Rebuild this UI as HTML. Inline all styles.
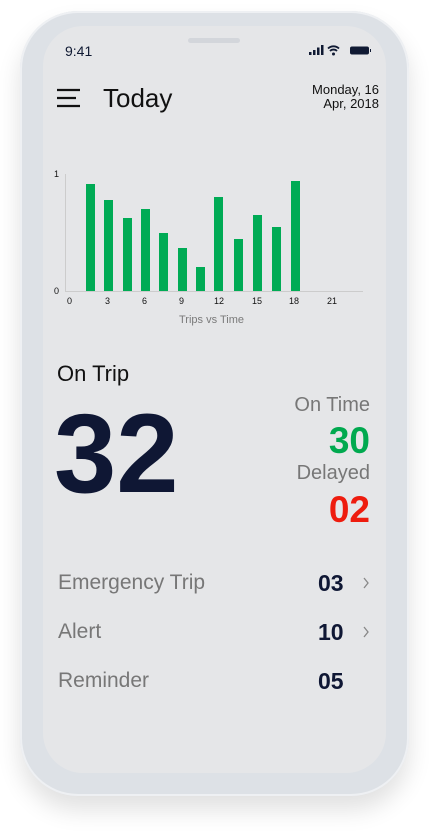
<!DOCTYPE html><html><head><meta charset="utf-8"><style>
body{margin:0;width:429px;height:832px;background:#fff;position:relative;overflow:hidden;font-family:"Liberation Sans",sans-serif}
.phone{position:absolute;left:20px;top:11px;width:389px;height:785px;border-radius:58px;background:#dde1e6;box-shadow:0 14px 24px rgba(0,0,0,.12),inset 0 0 0 2px #eef0f3}
.screen{position:absolute;left:43px;top:26px;width:343px;height:747px;border-radius:40px;background:#e5e6e8}
.a{position:absolute;white-space:nowrap}
.bar{position:absolute;background:#00ab55;width:9px}
</style></head><body>
<div class="phone"></div>
<div class="screen"></div>
<div class="a" style="left:188px;top:38px;width:52px;height:5px;border-radius:3px;background:#d3d6db"></div>
<div class="a" style="left:65px;top:43px;font-size:14px;color:#101a33">9:41</div>
<svg class="a" style="left:309px;top:45px" width="62" height="11"><rect x="0" y="7" width="2.5" height="3" fill="#101a33"/><rect x="4" y="5" width="2.5" height="5" fill="#101a33"/><rect x="8" y="2.5" width="2.5" height="7.5" fill="#101a33"/><rect x="12" y="0" width="2.5" height="10" fill="#101a33"/><path d="M19 3.5a8 8 0 0 1 11 0M21 6a5 5 0 0 1 7 0" stroke="#101a33" stroke-width="1.8" fill="none"/><circle cx="24.5" cy="9" r="1.5" fill="#101a33"/><rect x="41" y="1.5" width="19" height="8" rx="2" fill="#101a33"/><rect x="61" y="4" width="1.2" height="3" fill="#101a33"/></svg>
<svg class="a" style="left:56px;top:88px" width="26" height="20"><path d="M1 2H24M1 10H20M1 18H24" stroke="#111" stroke-width="2.2"/></svg>
<div class="a" style="left:103px;top:83px;font-size:26px;color:#111">Today</div>
<div class="a" style="right:50px;top:83px;font-size:13px;line-height:14px;color:#111;text-align:right">Monday, 16<br>Apr, 2018</div>
<div class="a" style="left:65px;top:174px;width:1px;height:117px;background:#ccc"></div>
<div class="a" style="left:65px;top:291px;width:298px;height:1px;background:#ccc"></div>
<div class="a" style="left:54px;top:169px;font-size:9px;color:#111">1</div>
<div class="a" style="left:54px;top:286px;font-size:9px;color:#111">0</div>
<div class="a" style="top:296px;font-size:9px;color:#111;left:0;width:429px;height:12px">
<span class="a" style="left:67px">0</span><span class="a" style="left:105px">3</span><span class="a" style="left:142px">6</span><span class="a" style="left:179px">9</span><span class="a" style="left:214px">12</span><span class="a" style="left:252px">15</span><span class="a" style="left:289px">18</span><span class="a" style="left:327px">21</span></div>
<div class="a" style="left:179px;top:314px;font-size:11px;color:#7a7a7a">Trips vs Time</div>
<div class="bar" style="left:86px;top:184px;height:107px"></div>
<div class="bar" style="left:104px;top:200px;height:91px"></div>
<div class="bar" style="left:123px;top:218px;height:73px"></div>
<div class="bar" style="left:141px;top:209px;height:82px"></div>
<div class="bar" style="left:159px;top:233px;height:58px"></div>
<div class="bar" style="left:178px;top:248px;height:43px"></div>
<div class="bar" style="left:196px;top:267px;height:24px"></div>
<div class="bar" style="left:214px;top:197px;height:94px"></div>
<div class="bar" style="left:234px;top:239px;height:52px"></div>
<div class="bar" style="left:253px;top:215px;height:76px"></div>
<div class="bar" style="left:272px;top:227px;height:64px"></div>
<div class="bar" style="left:291px;top:181px;height:110px"></div>
<div class="a" style="left:57px;top:361px;font-size:22px;color:#111">On Trip</div>
<div class="a" style="left:54px;top:398px;font-size:112px;font-weight:bold;color:#0f1734;line-height:112px">32</div>
<div class="a" style="right:59px;top:394px;font-size:20px;color:#777">On Time</div>
<div class="a" style="right:59px;top:420px;font-size:37px;font-weight:bold;color:#00a94f">30</div>
<div class="a" style="right:59px;top:462px;font-size:20px;color:#777">Delayed</div>
<div class="a" style="right:59px;top:489px;font-size:37px;font-weight:bold;color:#ee1c0e">02</div>
<div class="a" style="left:58px;top:571px;font-size:21px;color:#777">Emergency Trip</div>
<div class="a" style="left:58px;top:620px;font-size:21px;color:#777">Alert</div>
<div class="a" style="left:58px;top:669px;font-size:21px;color:#777">Reminder</div>
<div class="a" style="left:318px;top:570px;font-size:23px;font-weight:bold;color:#0f1734">03</div>
<div class="a" style="left:318px;top:619px;font-size:23px;font-weight:bold;color:#0f1734">10</div>
<div class="a" style="left:318px;top:668px;font-size:23px;font-weight:bold;color:#0f1734">05</div>
<svg class="a" style="left:362px;top:577px" width="8" height="12"><path d="M2 1L6 6L2 11" stroke="#888" stroke-width="1.3" fill="none"/></svg>
<svg class="a" style="left:362px;top:626px" width="8" height="12"><path d="M2 1L6 6L2 11" stroke="#888" stroke-width="1.3" fill="none"/></svg>
</body></html>
